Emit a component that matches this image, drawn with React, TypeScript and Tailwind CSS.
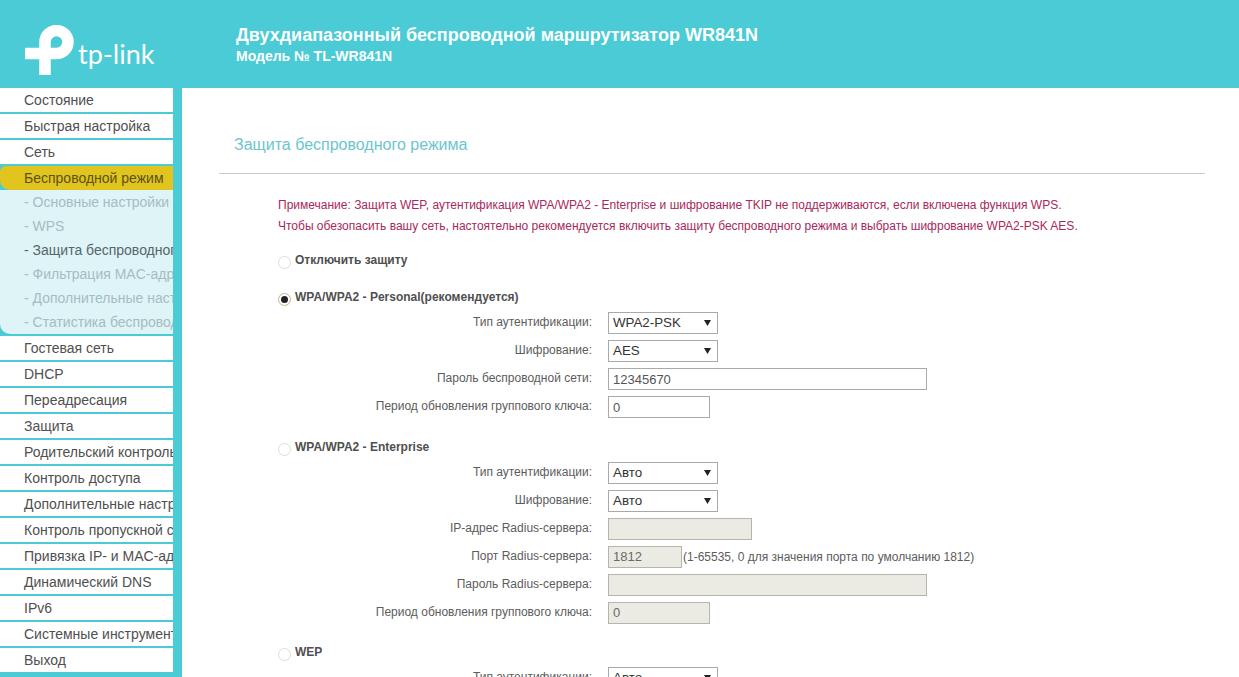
const menuTop = ["Состояние", "Быстрая настройка", "Сеть"];
const subMenu = [
  ["- Основные настройки", false],
  ["- WPS", false],
  ["- Защита беспроводного режима", true],
  ["- Фильтрация MAC-адресов", false],
  ["- Дополнительные настройки", false],
  ["- Статистика беспроводного режима", false],
] as const;
const menuBottom = [
  "Гостевая сеть",
  "DHCP",
  "Переадресация",
  "Защита",
  "Родительский контроль",
  "Контроль доступа",
  "Дополнительные настройки",
  "Контроль пропускной способности",
  "Привязка IP- и MAC-адресов",
  "Динамический DNS",
  "IPv6",
  "Системные инструменты",
  "Выход",
];

function MenuItem({ label }: { label: string }) {
  return (
    <div className="h-6 mb-[2px] bg-white pl-6 text-[14px] leading-6 text-[#4f4f4f] whitespace-nowrap overflow-hidden shrink-0">
      {label}
    </div>
  );
}

function Logo() {
  return (
    <div className="flex items-end h-[88px] w-[236px] shrink-0 pl-[25px] pb-[13px]">
      <svg width="50" height="50" viewBox="0 0 50 50" className="block shrink-0">
        <path
          d="M20 50 V17 A11.5 11.5 0 1 1 31.5 28.5 H0"
          fill="none"
          stroke="#fff"
          strokeWidth="11.5"
        />
      </svg>
      <span className="text-white text-[27px] leading-[32px] font-normal ml-[3px] mb-[5px] [font-family:Lato,sans-serif]">
        tp-link
      </span>
    </div>
  );
}

function Radio({ checked }: { checked?: boolean }) {
  return (
    <span
      className={`w-[13px] h-[13px] mt-1 rounded-full shrink-0 flex items-center justify-center bg-white border ${
        checked ? "border-[#c9b48a]" : "border-[#dcdcdc]"
      }`}
    >
      {checked && <span className="w-[7px] h-[7px] rounded-full bg-[#222]" />}
    </span>
  );
}

function Option({ label, checked, className }: { label: string; checked?: boolean; className: string }) {
  return (
    <div className={`flex items-center h-4 ${className}`}>
      <Radio checked={checked} />
      <span className="ml-1 text-[12px] font-bold text-[#4f4f4f] whitespace-nowrap">{label}</span>
    </div>
  );
}

function Row({ label, children }: { label: string; children: React.ReactNode }) {
  return (
    <div className="flex items-center h-[22px] mb-[6px]">
      <div className="w-[314px] text-right text-[12px] text-[#5c5c5c] whitespace-nowrap shrink-0 pb-[3px]">{label}</div>
      <div className="ml-4 flex items-center">{children}</div>
    </div>
  );
}

function Select({ value }: { value: string }) {
  return (
    <div className="w-[110px] h-[22px] border border-[#a9a9a9] bg-white flex items-center justify-between pl-1 pr-[6px] text-[13.33px] text-[#333]">
      <span>{value}</span>
      <svg width="7" height="6" viewBox="0 0 7 6" className="block">
        <path d="M0 0 H7 L3.5 6 Z" fill="#222" />
      </svg>
    </div>
  );
}

function Input({ value, width, disabled }: { value?: string; width: string; disabled?: boolean }) {
  return (
    <div
      className={`${width} h-[22px] border pl-1 text-[13px] ${
        disabled
          ? "leading-5 bg-[#ebebe4] border-[#b5b5ae] text-[#6a6a6a]"
          : "leading-[22px] bg-white border-[#a9a9a9] text-[#555]"
      }`}
    >
      {value}
    </div>
  );
}

export default function App() {
  return (
    <div className="w-[1239px] h-[677px] overflow-hidden flex flex-col bg-white [font-family:'Liberation_Sans',Arial,sans-serif]">
      <header className="h-[88px] bg-[#4acbd6] flex shrink-0">
        <Logo />
        <div className="pt-[24px] text-white font-bold whitespace-nowrap">
          <div className="text-[18px] leading-[22px]">Двухдиапазонный беспроводной маршрутизатор WR841N</div>
          <div className="text-[14px] leading-[18px] mt-[1px]">Модель № TL-WR841N</div>
        </div>
      </header>
      <div className="flex flex-1 min-h-0">
        <nav className="w-[182px] shrink-0 bg-[#4acbd6] pr-[9px] flex flex-col overflow-hidden">
          {menuTop.map((m) => (
            <MenuItem key={m} label={m} />
          ))}
          <div className="h-[24px] shrink-0 bg-[#e2c41f] rounded-bl-[10px] rounded-tl-[6px] pl-6 text-[14px] leading-6 text-[#5a5218] whitespace-nowrap">
            Беспроводной режим
          </div>
          <div className="h-[144px] shrink-0 bg-[#dff4f7] rounded-bl-[10px] pl-6 overflow-hidden mb-[2px]">
            {subMenu.map(([label, active]) => (
              <div
                key={label}
                className={`h-6 text-[14px] leading-6 whitespace-nowrap ${active ? "text-[#55666b]" : "text-[#a5bcc2]"}`}
              >
                {label}
              </div>
            ))}
          </div>
          {menuBottom.map((m) => (
            <MenuItem key={m} label={m} />
          ))}
        </nav>
        <main className="flex-1 min-w-0 pl-[37px] pr-[34px] overflow-hidden">
          <h1 className="pl-[15px] pt-[48px] h-[86px] text-[16px] leading-[18px] font-normal text-[#6cc5d0] border-b border-[#cccccc] whitespace-nowrap">
            Защита беспроводного режима
          </h1>
          <div className="pl-[59px]">
            <p className="mt-[21px] text-[12px] leading-[21px] text-[#a8285c] whitespace-nowrap">
              Примечание: Защита WEP, аутентификация WPA/WPA2 - Enterprise и шифрование TKIP не поддерживаются, если включена функция WPS.
              <br />
              Чтобы обезопасить вашу сеть, настоятельно рекомендуется включить защиту беспроводного режима и выбрать шифрование WPA2-PSK AES.
            </p>
            <Option label="Отключить защиту" className="mt-[15px]" />
            <Option label="WPA/WPA2 - Personal(рекомендуется)" checked className="mt-[21px] mb-[7px]" />
            <Row label="Тип аутентификации:"><Select value="WPA2-PSK" /></Row>
            <Row label="Шифрование:"><Select value="AES" /></Row>
            <Row label="Пароль беспроводной сети:"><Input value="12345670" width="w-[319px]" /></Row>
            <Row label="Период обновления группового ключа:"><Input value="0" width="w-[102px]" /></Row>
            <Option label="WPA/WPA2 - Enterprise" className="mt-[21px] mb-[7px]" />
            <Row label="Тип аутентификации:"><Select value="Авто" /></Row>
            <Row label="Шифрование:"><Select value="Авто" /></Row>
            <Row label="IP-адрес Radius-сервера:"><Input width="w-[144px]" disabled /></Row>
            <Row label="Порт Radius-сервера:">
              <Input value="1812" width="w-[74px]" disabled />
              <span className="ml-[1px] text-[12px] text-[#5c5c5c] whitespace-nowrap">(1-65535, 0 для значения порта по умолчанию 1812)</span>
            </Row>
            <Row label="Пароль Radius-сервера:"><Input width="w-[319px]" disabled /></Row>
            <Row label="Период обновления группового ключа:"><Input value="0" width="w-[102px]" disabled /></Row>
            <Option label="WEP" className="mt-[20px] mb-[7px]" />
            <Row label="Тип аутентификации:"><Select value="Авто" /></Row>
          </div>
        </main>
      </div>
    </div>
  );
}
